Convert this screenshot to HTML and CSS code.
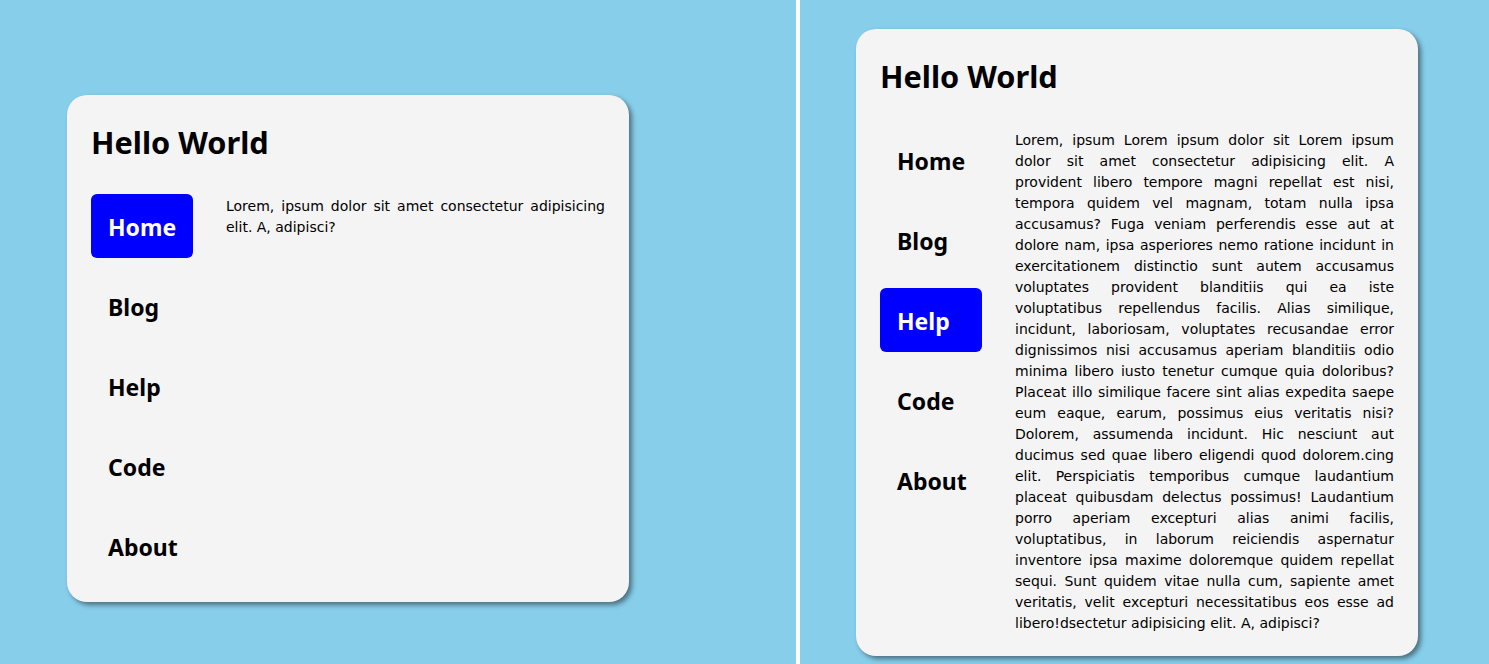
FILE: index.html
```html
<!DOCTYPE html>
<html lang="en">
<head>
<meta charset="utf-8">
<title>Hello World</title>
<link rel="stylesheet" href="styles.css">
</head>
<body>
<div class="stage">
  <section class="pane pane-left">
    <div class="card">
      <h1 class="title">Hello World</h1>
      <div class="content">
        <nav class="nav">
          <a class="nav-item active">Home</a>
          <a class="nav-item">Blog</a>
          <a class="nav-item">Help</a>
          <a class="nav-item">Code</a>
          <a class="nav-item">About</a>
        </nav>
        <p class="text">Lorem, ipsum dolor sit amet consectetur adipisicing elit. A, adipisci?</p>
      </div>
    </div>
  </section>
  <div class="divider"></div>
  <section class="pane pane-right">
    <div class="card">
      <h1 class="title">Hello World</h1>
      <div class="content">
        <nav class="nav">
          <a class="nav-item">Home</a>
          <a class="nav-item">Blog</a>
          <a class="nav-item active">Help</a>
          <a class="nav-item">Code</a>
          <a class="nav-item">About</a>
        </nav>
        <p class="text">Lorem, ipsum Lorem ipsum dolor sit Lorem ipsum dolor sit amet consectetur adipisicing elit. A provident libero tempore magni repellat est nisi, tempora quidem vel magnam, totam nulla ipsa accusamus? Fuga veniam perferendis esse aut at dolore nam, ipsa asperiores nemo ratione incidunt in exercitationem distinctio sunt autem accusamus voluptates provident blanditiis qui ea iste voluptatibus repellendus facilis. Alias similique, incidunt, laboriosam, voluptates recusandae error dignissimos nisi accusamus aperiam blanditiis odio minima libero iusto tenetur cumque quia doloribus? Placeat illo similique facere sint alias expedita saepe eum eaque, earum, possimus eius veritatis nisi? Dolorem, assumenda incidunt. Hic nesciunt aut ducimus sed quae libero eligendi quod dolorem.cing elit. Perspiciatis temporibus cumque laudantium placeat quibusdam delectus possimus! Laudantium porro aperiam excepturi alias animi facilis, voluptatibus, in laborum reiciendis aspernatur inventore ipsa maxime doloremque quidem repellat sequi. Sunt quidem vitae nulla cum, sapiente amet veritatis, velit excepturi necessitatibus eos esse ad libero!dsectetur adipisicing elit. A, adipisci?</p>
      </div>
    </div>
  </section>
</div>
</body>
</html>
```
FILE: styles.css
```css
html, body {
  margin: 0;
  padding: 0;
  height: 100%;
}
body {
  background: #87ceeb;
  font-family: "DejaVu Sans", sans-serif;
  color: #000;
  overflow: hidden;
}
.stage {
  display: flex;
  height: 664px;
}
.pane {
  box-sizing: border-box;
  height: 100%;
}
.pane-left {
  width: 796px;
  flex: none;
  padding: 95px 0 0 67px;
}
.divider {
  width: 4px;
  flex: none;
  background: #ffffff;
}
.pane-right {
  flex: 1;
  padding: 29px 0 0 56px;
}
.card {
  width: 562px;
  box-sizing: border-box;
  background: #f4f4f4;
  border-radius: 20px;
  padding: 24px;
  box-shadow: 3px 3px 5px rgba(0, 0, 0, 0.45);
}
.title {
  margin: 3px 0 32px;
  font-family: "Noto Sans", sans-serif;
  font-weight: 700;
  font-size: 30.7px;
  line-height: 40px;
}
.content {
  display: flex;
  align-items: flex-start;
  gap: 33px;
}
.nav {
  width: 102px;
  flex: none;
  display: flex;
  flex-direction: column;
  gap: 16px;
}
.nav-item {
  display: flex;
  align-items: center;
  height: 64px;
  box-sizing: border-box;
  padding: 2px 0 0 17px;
  border-radius: 6px;
  font-family: "Noto Sans", sans-serif;
  font-weight: 700;
  font-size: 23px;
  color: #000;
  text-decoration: none;
}
.nav-item.active {
  background: #0000ff;
  color: #ffffff;
}
.text {
  flex: 1;
  margin: 0 0 -2px;
  padding-top: 2px;
  font-size: 14px;
  line-height: 21px;
  text-align: justify;
}
```
